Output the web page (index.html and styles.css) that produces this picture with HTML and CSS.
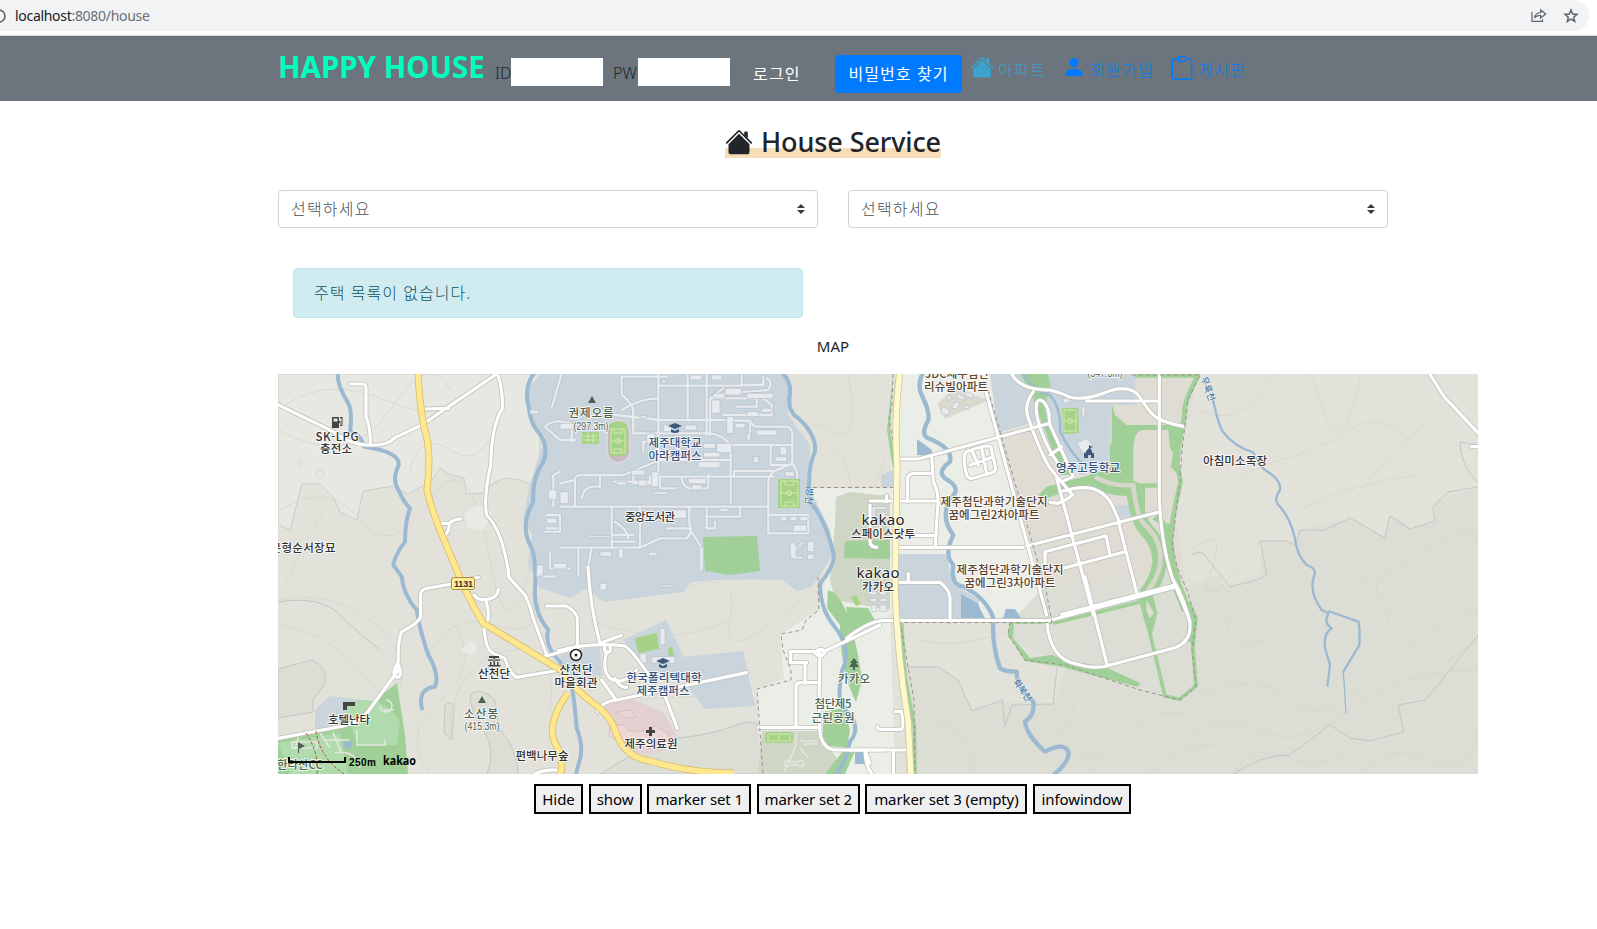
FILE: index.html
```html
<!DOCTYPE html>
<html lang="ko">
<head>
<meta charset="utf-8">
<title>Happy House</title>
<link rel="stylesheet" href="styles.css">
</head>
<body>
<div class="chrome">
  <div class="address">
    <svg class="info" width="14" height="14" viewBox="0 0 14 14"><circle cx="7" cy="7" r="6" fill="none" stroke="#5f6368" stroke-width="1.6"/></svg>
    <span class="url">localhost<span class="path">:8080/house</span></span>
    <svg class="share" width="16" height="15" viewBox="0 0 16 15" fill="none" stroke="#5f6368" stroke-width="1.2"><path d="M1 4v9.3h10.5v-2"/><path d="M3.500 10C4 6.500 6 4.700 9.700 4.500V1.800L14.700 6l-5 4V7.300C7 7.300 5 8 3.500 10z"/></svg>
    <svg class="star" width="16" height="16" viewBox="0 0 16 16" fill="none" stroke="#5f6368" stroke-width="1.5"><path d="M8 2l1.700 4 4.300.4-3.300 2.800 1 4.300L8 11.200l-3.700 2.300 1-4.300L2 6.400 6.300 6z"/></svg>
  </div>
</div>

<nav class="navbar">
  <a class="brand">HAPPY HOUSE</a>
  <label class="field id">ID<input></label>
  <label class="field pw">PW<input></label>
  <a class="login">로그인</a>
  <button class="find">비밀번호 찾기</button>
  <a class="menu apt"><svg width="24" height="24" viewBox="0 0 16 16" fill="currentColor"><path d="M8 3.293l6 6V13.500a1.500 1.500 0 0 1-1.500 1.500h-9A1.500 1.500 0 0 1 2 13.500V9.293l6-6zm5-.793V6l-2-2V2.500a.5.5 0 0 1 .5-.5h1a.5.5 0 0 1 .5.5z"/><path d="M7.293 1.500a1 1 0 0 1 1.414 0l6.647 6.646a.5.5 0 0 1-.708.708L8 2.207 1.354 8.854a.5.5 0 1 1-.708-.708L7.293 1.500z"/></svg><span>아파트</span></a>
  <a class="menu join"><svg width="24" height="24" viewBox="0 0 16 16" fill="currentColor"><path d="M3 14s-1 0-1-1 1-4 6-4 6 3 6 4-1 1-1 1H3zm5-6a3 3 0 1 0 0-6 3 3 0 0 0 0 6z"/></svg><span>회원가입</span></a>
  <a class="menu board"><svg width="24" height="24" viewBox="0 0 16 16" fill="none" stroke="currentColor"><path d="M4.500 2H3a1.500 1.500 0 0 0-1.500 1.500V14A1.500 1.500 0 0 0 3 15.500h10a1.500 1.500 0 0 0 1.500-1.500V3.500A1.500 1.500 0 0 0 13 2h-1.500"/><rect x="5.500" y=".5" width="5" height="3" rx=".8"/></svg><span>게시판</span></a>
</nav>

<main>
  <h3 class="title"><span><svg width="28" height="28" viewBox="0 0 16 16" fill="currentColor"><path d="M8 3.293l6 6V13.500a1.500 1.500 0 0 1-1.500 1.500h-9A1.500 1.500 0 0 1 2 13.500V9.293l6-6zm5-.793V6l-2-2V2.500a.5.5 0 0 1 .5-.5h1a.5.5 0 0 1 .5.5z"/><path d="M7.293 1.500a1 1 0 0 1 1.414 0l6.647 6.646a.5.5 0 0 1-.708.708L8 2.207 1.354 8.854a.5.5 0 1 1-.708-.708L7.293 1.500z"/></svg><b>House Service</b></span></h3>
  <div class="selects">
    <div class="select">선택하세요<svg width="8" height="10" viewBox="0 0 4 5"><path fill="#343a40" d="M2 0L0 2h4zm0 5L0 3h4z"/></svg></div>
    <div class="select">선택하세요<svg width="8" height="10" viewBox="0 0 4 5"><path fill="#343a40" d="M2 0L0 2h4zm0 5L0 3h4z"/></svg></div>
  </div>
  <div class="alert">주택 목록이 없습니다.</div>
  <p class="maptitle">MAP</p>

  <svg class="map" width="1200" height="400" viewBox="278 374 1200 400">
    <defs>
      <g id="wide">
        <g transform="translate(270 365) scale(.33333)">
          <path d="M20 117L190 200Q240 238 290 240Q350 245 375 218L455 180L690 20M682 25Q700 80 697 130Q665 180 662 300Q640 400 650 450Q700 500 717 635M242 57H280Q290 57 288 80V155Q302 190 301 238M462 132L535 130M508 475H537Q560 460 572 462M537 475Q540 500 522 512"/>
        </g>
        <g transform="translate(270 570) scale(.33333)">
          <path d="M715 0V20L765 75Q782 110 788 140L830 255M830 108H890Q925 130 922 150V240M820 260L930 230M545 42L470 55Q450 60 452 80V140Q445 160 395 185Q382 210 385 300Q320 390 290 430Q270 455 220 468L20 506M612 75Q630 98 665 85Q682 80 685 58M648 92Q660 130 652 155M642 165Q645 240 670 250L705 265Q718 310 740 322Q780 315 870 300M382 280Q360 320 385 322Q400 310 382 280M600 28L625 22M795 612Q820 598 860 600"/>
        </g>
        <g transform="translate(560 570) scale(.33333)">
          <path d="M84 -10Q90 110 120 220L185 196M-5 242Q90 215 195 228Q215 240 270 320M135 228Q130 240 140 250Q155 245 150 232M140 245Q125 300 150 325Q190 350 230 300M165 325Q180 355 200 352M125 330L168 390M112 425Q125 395 170 390L560 308M310 365L352 475M690 245H780M692 248V278H740M735 280V340M780 338H720Q708 340 708 350V472M595 472H780M780 250Q775 380 780 490Q790 540 830 540H970M915 540L930 580"/>
          <path d="M765 248Q780 230 797 245Q780 270 765 248M790 245Q900 195 960 165"/>
        </g>
        <g transform="translate(850 365) scale(.33333)">
          <path d="M150 282H205L440 218L600 175M245 275L250 350Q270 390 262 440L256 545M140 547H520M172 410V345Q172 325 195 325H245M60 408H265M110 410V392M60 420V530Q60 545 80 547M190 512H256M405 70L590 750M620 340L730 750M530 543L930 440M585 600V560L768 512L780 570M640 610L825 560M805 470L862 690M140 652H270Q300 675 300 700V770M175 650V625M475 0Q490 75 600 75Q640 85 655 95Q700 108 760 85Q830 55 865 90Q900 145 920 158Q950 175 1000 184M710 108H925M928 25V400Q935 560 975 660Q1010 740 1020 770M640 378Q760 340 795 440L810 475M550 80Q520 120 535 160Q570 260 600 310L668 390Q650 405 625 415L600 412M562 160Q550 90 580 110Q600 130 598 175L670 335L635 350M562 160Q580 230 620 290M600 270L635 245M635 748L975 660"/>
          <path d="M350 260Q335 270 350 330Q355 345 375 338L430 322Q440 315 435 300L422 245Q410 238 350 260M365 255L385 300M360 300L430 275M395 250L410 325"/>
        </g>
        <g transform="translate(850 580) scale(.33333)">
          <path d="M-10 175Q60 120 105 122H590M590 122Q600 240 680 252Q740 270 780 255L975 203Q1030 180 1018 120Q1000 50 970 0M705 -10L772 258M595 122L980 20M-5 510H175M45 510Q45 555 65 580M130 510V585M135 395H155Q165 450 150 448H90Q80 445 82 440"/>
        </g>
        <g transform="translate(1140 365) scale(.33333)"><path d="M865 20L912 95L1020 210M995 245H1025"/></g>
      </g>
      <g id="lanes" transform="translate(560 365) scale(.33333)">
        <path d="M295 25V340M185 35H320M185 35V90Q200 100 220 130V205H450Q490 210 512 240V415M185 135Q240 100 295 100M300 62H545M383 25V160M440 25V210M165 150L300 165H480L570 168L585 185H680Q697 190 697 210V295L640 320Q625 335 625 355V505H745V450H625M512 240H695M632 240V300H690M700 300Q712 310 712 340M522 335V318H640M270 335H640M0 425H625M45 425V340Q50 328 70 330H190L300 285M120 330V365H95Q70 370 65 400M155 425V545M240 425V545M0 548H240L300 520H380Q400 500 388 475V425M155 510H220M155 530H225M165 470Q200 490 205 520M320 490H385M388 490L420 540V615M450 210Q450 160 450 100L490 70M450 100H590V125H530M620 40Q640 50 625 75L490 85M545 30V60H610V35M490 150H635V120L610 100M570 168V220M300 370H350M300 340V365M220 330V355H300M440 425V490M440 455H540V425M440 490H465V470M55 548V630M95 548L80 630M250 260V230H300M160 350H270V335M365 340Q370 380 420 370H445V330M300 285H510"/>
        <path d="M-20 425V330L0 320M-40 450H0V500H-45M-30 560V610H30M5 25L-25 130M-45 185Q-20 160 35 175V230M-40 190L0 225H45M0 355L45 345"/>
      </g>
      <g id="cap"><path d="M-7-2L0-5 7-2 0 1zM-4 1L0 3 4 1v3q-4 2-8 0z"/></g>
    </defs>

    <rect x="278" y="374" width="1200" height="400" fill="#e2e2db"/>

    <!-- terrain shading -->
    <path fill="#e6e8e1" stroke="#cccdc7" d="M278 374H540V490L520 480 505 478 492 484 485 493 466 494 464 478 448 474 441 468 430 482 408 494 393 486 363 491 357 520 340 512 334 498 320 484H302L290 530 278 525z"/>
    <path fill="#dcddd5" d="M905 667H938L958 680 972 710 1000 702 1053 704 1065 670 1180 588 1220 575 1225 587 1260 575 1262 541 1296 544 1300 530 1350 518 1385 537 1396 516 1410 529 1435 522 1435 500 1478 488V774H905z"/>
    <path fill="#dcddd5" stroke="#c5c6c2" d="M278 669L312 660Q328 666 325 684L313 700V712L278 718z"/>
    <path fill="#dcddd5" stroke="#c5c6c2" stroke-width="3" transform="translate(270 570) scale(.33333)" d="M600 375Q630 345 675 390Q680 440 690 480Q740 530 745 615H650Q680 540 640 480Q600 420 600 375zM525 405Q540 390 553 410L545 510 522 490z"/>
    <path fill="#dcddd5" stroke="#c5c6c2" d="M600 774L640 750 660 738Q700 740 745 722L762 724V774z"/>

    <g class="contour">
      <path d="M285 405Q330 375 390 402T480 380T520 374M278 430Q350 470 390 410T450 390M410 470Q420 430 450 450T500 420M280 510Q330 480 360 520T430 500T490 560T540 520M280 600Q330 590 370 620T400 690M278 625Q320 630 350 660T390 710M285 585Q300 550 325 510M455 625Q480 665 440 700T430 774M425 660Q450 610 495 625T540 600M450 720Q460 660 510 650T550 710M600 590Q650 600 695 585T730 620T800 600M640 700Q720 690 780 710M590 620Q670 650 730 620M802 465Q800 410 830 430T850 385T880 380M815 470Q840 430 850 480T885 460"/>
      <path d="M1200 410Q1240 430 1270 380T1320 400T1360 378M1205 510Q1240 470 1280 460T1350 430T1410 440M1190 550Q1230 520 1210 575T1260 541M1330 565Q1360 600 1410 560T1478 540M1370 650Q1400 620 1380 600T1440 520M1205 590Q1240 590 1230 620T1270 640M1200 695Q1260 670 1290 700T1370 680T1478 610M1180 740Q1220 710 1260 730T1350 710T1478 670M1235 774Q1250 740 1290 758T1370 730T1478 640M1360 774Q1390 740 1430 760T1478 730M930 724Q960 715 975 770M920 640Q960 650 1010 630M1070 700Q1080 720 1060 730T1100 760M1090 774Q1140 700 1190 715M1150 774Q1180 740 1220 745M1355 500Q1380 460 1430 420M1300 510Q1360 480 1420 475"/>
      <circle cx="320" cy="474" r="4"/><ellipse cx="300" cy="463" rx="2" ry="4"/>
    </g>
    <path class="ridge" d="M1192 554L1202 552L1230 587L1257 580L1267 575L1260 541H1285L1296 545L1300 530L1325 530L1350 518L1366 527L1385 538L1390 516L1410 529L1435 521L1433 507L1448 492L1478 487M1234 774Q1260 755 1290 755L1330 725L1350 738L1370 741L1404 732L1398 705L1425 700L1450 670L1478 635M278 602Q320 595 340 615T380 650M905 667H938L958 680L972 711L1002 700L1005 727L1012 705L1053 704L1057 668M1478 483Q1460 465 1460 442L1478 445"/>

    <!-- districts -->
    <path fill="#ebede7" d="M896 374H990L1060 620H1050L895 622 890 610 895 774H761L757 689 784 679 780 635 818 610 833 545 806 488H890z"/>
    <path fill="#c9d4dc" d="M540 374H783L790 390 788 415 810 445 808 485 830 530 833 555 812 587 797 591 782 580Q710 578 690 583L684 592 604 602 585 589 570 598 540 588 528 565 532 535 523 520 530 484 544 440 532 427 526 390z"/>
    <path fill="#c9d4dc" d="M623 640L666 620 684 657 743 651 755 706 705 709 683 680 650 678zM990 374H1135V405H1111V475L1070 470 1048 440 1040 420 998 433zM898 554H946L953 583 979 600V618H898zM881 475L893 470V487H881zM560 655L600 645 602 675 570 690z"/>
    <path fill="#dfdcd4" d="M998 433L1040 425 1060 480 1100 480 1112 404H1132V374H1198L1180 460 1176 520 1190 610 1052 619z"/>
    <path fill="#dcddd5" d="M1043 588L1180 570 1196 620 1194 683 1180 700 1046 656 1012 640 1013 620z"/>
    <path fill="#c9d4dc" d="M1116 506L1130 504 1134 516 1118 519z"/>
    <path fill="#cfd6c5" d="M836 497L850 492 890 496V574L890 610 835 600 830 580 835 525zM762 731H820L846 774H758z"/>
    <path fill="#c9d4dc" d="M315 710L330 696 365 700 369 708 350 727 315 732z"/>
    <path fill="#e3d1d1" d="M599 705L630 698 663 712 680 740 660 752 630 755z"/>
    <path fill="#dad9ce" d="M937 404L955 389 989 400 945 419z"/>
    <g fill="#eaeae5"><path d="M465 513L479 505 492 513 484 530 467 528zM461 650L470 641 476 642 475 654 461 652z"/></g>

    <!-- parks -->
    <g fill="#a0d098">
      <path d="M703 537L757 536 760 571 730 575 705 571zM845 541L890 540V559L844 558zM846 607L868 608 876 622 850 632zM828 590Q850 595 862 680L856 702Q840 670 840 625L827 608z"/>
      <path d="M397 683L405 735 408 774H278V740L345 724zM843 708L850 730 847 748 823 745 823 712zM843 751H855L845 774H825z"/>
      <path d="M1010 620L1050 620 1052 624H1014L1013 638 1030 658 1052 655 1064 660 1105 667 1140 683 1138 687 1062 667 1025 661 1008 635zM1052 622L1148 598V602L1054 625zM893 374L890 430Q895 450 893 470L887 430z"/>
      <path d="M1020 374H1048L1051 390Q1040 405 1050 430L1075 475 1060 475 1045 430 1030 390z"/>
    </g>
    <g transform="translate(850 365) scale(.33333)">
      <path fill="#a0d098" d="M785 115L795 150 830 180H1000L985 250 975 300 995 350 975 420 960 480H935L870 440 860 385 790 390 720 360 660 375 590 400 565 390 590 365 720 330 725 290 785 235zM820 25H1050V38H820z"/>
      <path fill="#dfdcd4" d="M850 260Q850 195 880 195H925V355H860Q845 350 850 330zM935 195H955L960 250 970 265 962 305 985 330 988 370 962 475Q930 485 935 400zM885 368H930V440L900 470 885 440z"/>
      <g fill="none" stroke="#a0d098" stroke-width="14" stroke-linejoin="round">
        <path stroke-width="44" d="M735 345Q780 375 850 370Q860 460 885 490Q935 540 928 600Q920 650 885 690"/>
        <path stroke="#d8d6cb" d="M735 335Q780 365 850 360Q860 460 885 480Q940 530 930 600Q920 650 890 680"/>
        <path d="M1045 30Q1000 110 1003 150L985 250 982 300 992 350 970 450 962 520 975 640 1010 720 1035 780"/>
        <path stroke-width="30" d="M945 480L958 580 980 660 1010 735"/>
        <path d="M550 600L590 750"/>
      </g>
    </g>
    <g transform="translate(850 580) scale(.33333)">
      <path fill="#a0d098" d="M865 50H910L922 100 903 175 885 130zM1018 60L1042 110 1035 200 1010 180z"/>
      <path fill="#dcddd5" d="M890 60L912 100 900 115 888 90z"/>
      <path fill="none" stroke="#a0d098" stroke-width="11" d="M1038 110L1028 190 1038 318 988 358 945 348 895 140M155 130L165 290 193 440 195 590"/>
    </g>
    <g fill="#b0dbac"><path d="M345 705Q375 690 400 720L397 745H357z"/><path d="M278 743L340 733 348 774H290z"/></g>
    <g fill="#c9d4dc"><path d="M1052 374H1135V405H1110V470L1080 475 1060 430 1050 400z"/></g>

    <!-- water -->
    <g class="river">
      <path transform="translate(270 365) scale(.33333)" stroke-width="12" d="M203 20Q200 60 235 115Q248 140 240 200Q270 205 282 245Q390 260 386 300Q365 345 385 375Q400 410 420 430Q405 470 405 530Q375 570 370 600L395 635Q400 690 440 735Q450 800 475 870Q510 930 495 965Q440 970 457 1035"/>
      <path transform="translate(270 365) scale(.33333)" stroke-width="12" d="M800 15Q760 60 775 120Q780 170 800 195Q840 240 820 290Q785 340 790 410Q750 480 780 540Q800 570 795 670Q790 740 835 795Q820 840 870 890L905 960Q915 1020 920 1090Q945 1150 925 1200L915 1240"/>
      <path transform="translate(560 365) scale(.33333)" stroke-width="12" d="M660 15Q695 50 690 85Q680 140 715 160Q770 210 765 260Q740 310 750 410Q795 460 822 570Q820 610 780 655Q780 730 820 780Q880 850 845 920Q830 1010 850 1030Q910 1080 870 1130Q855 1200 820 1240"/>
      <path transform="translate(850 365) scale(.33333)" stroke-width="13" d="M220 20Q200 60 215 90Q240 140 235 165Q210 210 235 220Q310 250 300 290Q260 320 285 340Q340 370 300 400Q270 460 310 510Q280 570 310 600Q300 660 340 665Q410 700 430 760Q425 840 450 910Q465 920 500 920Q500 970 550 1010Q555 1050 525 1070Q530 1110 585 1160Q640 1130 655 1160Q660 1190 610 1230"/>
      <path transform="translate(850 365) scale(.33333)" stroke-width="7" d="M520 25Q550 80 600 90Q635 130 630 200Q660 260 700 300"/>
      <path transform="translate(1140 365) scale(.33333)" stroke-width="7" d="M218 100Q230 160 245 195Q280 245 340 262Q355 300 375 315Q425 345 420 375Q400 405 415 420Q450 455 465 520Q470 570 500 600Q530 610 523 630Q505 680 545 735L565 745Q550 775 575 790Q545 810 558 860L570 900L562 965M565 738L655 770Q660 790 658 840L610 920"/>
      <path transform="translate(1140 365) scale(.33333)" stroke-width="4" d="M658 840L610 920L618 1045"/>
    </g>
    <path fill="#9bb9d0" d="M917 439L932 450V456L917 455zM961 594L977 603 985 618H961zM1006 609L1015 609 1021 618H1003zM855 752H865V764H855z"/>
    <circle cx="348" cy="745" r="4" fill="#9bb9d0"/>

    <!-- campus buildings and lanes -->
    <use href="#lanes" class="lane-casing"/>
    <use href="#lanes" class="lane"/>
    <g class="buildings" transform="translate(560 365) scale(.33333)">
      <path d="M390 30h35v15h-35zM455 30h30v15h-30zM495 70h50v20h-50zM460 85h35v15h-35zM455 105h25v40h-25zM560 85h80v15h-80zM560 140h35v15h-35zM605 130h30v12h-30zM500 155h20v50h-20zM525 175h30v14h-30zM590 195h60v16h-60zM470 235h45v28h-45zM430 262h50v14h-50zM415 290h65v18h-65zM430 235h35v15h-35zM310 180h30v20h-30zM375 180h35v15h-35zM240 152h20v8h-20zM260 205h25v30h-25zM660 245h20v25h-20zM645 275h35v14h-35zM675 320h28v14h-28zM215 315h40v15h-40zM170 350h30v10h-30zM235 345h25v18h-25zM275 320h20v45h-20zM385 340h55v16h-55zM395 360h30v15h-30zM330 435h50v25h-50zM235 440h35v20h-35zM85 512h68v6h-68zM175 550h15v30h-15zM120 560h35v14h-35zM265 562h25v10h-25zM660 455h20v12h-20zM690 455h20v12h-20zM720 455h25v12h-25zM700 480h40v20h-40zM742 530h20v30h-20zM742 568h20v15h-20zM690 535l15-3 5 15 15-18 8 5-25 20v20h20v8h-35zM480 430h25v10h-25zM580 275h15v18h-15zM280 380h45v8h-45zM0 380h25v35h-25zM-40 460h30v15h-30zM-35 375h25v28h-25zM0 175h40v18h-40zM420 545h10v70h-10zM-20 595h40v15h-40zM305 45h12v10h-12zM560 205h12v20h-12z"/>
      <path d="M-70 600h20v35h-20zM-60 630h50v10h-50zM300 660h40v6h-40zM120 655h20v20h-20zM240 865h20v30h-20zM300 790h15v50h-15zM275 875h70v20h-70zM-90 135h25v12h-25zM-45 485h40v10h-40z"/>
      <path transform="translate(870 0)" d="M290 90l20 8-18 8zM275 125l24 8-5 18-20-5zM325 88l20 8-5 10-22-8zM350 80l20 8-5 12-20-8zM315 110l15 5-10 18-15-5zM345 120l15 5-5 8-14-4zM680 235l30-15 20 25-30 20zM640 100h18v14h-18zM695 125h10v28h-10zM65 425h45v8H75v30H65zM95 440h10v40h-10zM60 655h20v10h-20zM90 655h20v10h-20zM60 680h20v10h-20zM90 680h20v10h-20zM60 700h20v10h-20zM90 700h20v10h-20zM65 720h15v20h-15zM90 720h20v20h-20z"/>
    </g>
    <g fill="#edd6d6" stroke="#cfb2b2" stroke-width=".6"><path d="M610 725h14l5 6h20l6-5 14 8v8h-42l-18-5zM617 712l14-2 5 8-12-1z"/></g>
    <g fill="none" stroke="#e4e8df" stroke-width="1.500"><path d="M292 742h25v6h-25zM300 731l-5 18M320 733l10 15M357 730v15h28v-5M380 706a6 6 0 1 0 6-6M384 710h10M333 732l8 20M325 740h25M335 753q20-4 25 15M796 728v16q-4 12-12 28M790 762h8a3 3 0 1 1 0 3h-8a3 3 0 1 1 0-3M800 741h16v3h-12M800 748l8 10"/></g>

    <!-- sport fields -->
    <rect x="607" y="420" width="23" height="43" rx="11.500" fill="#c9babf" stroke="#d6dadd" stroke-width="2"/>
    <g class="field-green"><rect x="609" y="422" width="18" height="34" rx="5"/><rect x="582" y="432" width="17" height="12"/><rect x="778" y="479" width="22" height="29"/><path d="M635 638L657 633 659 649 638 653zM668 648l4-1 2 8-5 2zM1062 408h16l1 25-16 1z"/><rect x="765" y="732" width="28" height="11" rx="4"/><path d="M851 597l5-2 5 9-5 2zM1141 592"/></g>
    <g fill="none" stroke="#d9edb9" stroke-width=".9"><path d="M611 429h14v24h-14zM611 441h14M614 429v4h8v-4M614 453v-4h8v4M781 481h17v25h-17zM781 493h17M785 481v4h9v-4M785 506v-4h9v4M583 436h15M583 440h15M588 433v10M593 433v10M1064 410h12v21h-12zM1064 421h12M768 734h22v7h-22zM779 734v7"/><circle cx="618" cy="441" r="2.500"/><circle cx="789" cy="493" r="2.500"/><circle cx="1070" cy="421" r="2.500"/></g>

    <!-- roads -->
    <use href="#wide" class="road-casing"/>
    <use href="#wide" class="road"/>
    <g class="dash">
      <path d="M806 487.500H895M818 577L819 610 806 620 802 630 781 634 783 650 791 670V680L757 689 763 774M893 374L892 405 889 420 895 450M988 390L1046 590 1052 622.500H900L914 700 915 774M1010 622L1008 635 1025 660 1065 665 1140 690 1180 700 1196 687 1192 650 1196 620 1187 590 1178 570 1172 545 1180 480 1182 450 1188 400 1200 375H1130"/>
    </g>
    <path fill="none" stroke="#b4482f" stroke-dasharray="3 2" d="M306 733Q320 755 317 774M316 731Q320 758 344 774"/>
    <g class="highway">
      <path class="edge" d="M418 370Q419 400 424 427Q432 450 427 490Q430 505 440 530L463 585Q475 610 483 623L562 671Q575 690 598 707Q612 718 617 735Q625 757 650 761Q690 773 734 773M568 693Q545 725 556 745Q565 760 560 776"/>
      <path d="M418 370Q419 400 424 427Q432 450 427 490Q430 505 440 530L463 585Q475 610 483 623L562 671Q575 690 598 707Q612 718 617 735Q625 757 650 761Q690 773 734 773M568 693Q545 725 556 745Q565 760 560 776"/>
      <path class="edge pale" d="M900 370Q894 420 897 465L895 590Q898 660 908 720L911 776"/>
      <path class="pale" d="M900 370Q894 420 897 465L895 590Q898 660 908 720L911 776"/>
    </g>
    <rect x="451.500" y="577.500" width="23" height="12" rx="2" fill="#ffeb95" stroke="#a68d40"/>

    <!-- map symbols -->
    <g fill="#444"><path fill-rule="evenodd" d="M332 417h7v11h-7zM333.500 418.500v3h4v-3zM339 421h1.500v4h1v-6l-2-2h3v9h-2.500v-3h-1zM343 702h12v4h-8v4h-4zM489 656h10v2h-10zM488 659.500h12v1.200h-12zM490 662h1.500v3h2v-7h1.500v7h2v-3h1.500v3h2v1.500h-12v-1.500h1.500zM649 727h3v3h3v3h-3v3h-3v-3h-3v-3h3z"/></g>
    <g fill="#4d6351"><path d="M588 403l4-7 4 7zM478 703l4-7 4 7zM298 742l7 4-6 3v4h-1zM854 658l4 5h-2l3 4h-4v3h-2v-3h-4l3-4h-2z"/></g>
    <g fill="#3d5a7d"><use href="#cap" x="675" y="428"/><use href="#cap" x="663" y="663"/><path d="M1084 458v-5h2v-2l3-3v-3l4 2-3 1 2 3v2h2v5h-3v-3h-3v3z"/></g>
    <circle cx="576" cy="655" r="5.500" fill="#fff" stroke="#222" stroke-width="1.500"/><circle cx="576" cy="655" r="1.500" fill="#222"/>

    <!-- labels -->
    <g class="label">
      <text x="337" y="441" textLength="43">SK-LPG</text><text x="336" y="453" textLength="32">충전소</text>
      <text x="303" y="552" textLength="65">문형순서장묘</text>
      <text x="650" y="521" textLength="50">중앙도서관</text>
      <text x="494" y="678" textLength="32">산천단</text>
      <text x="542" y="760" textLength="53">편백나무숲</text>
      <text x="349" y="724" textLength="42">호텔난타</text>
      <text x="576" y="674" textLength="33">산천단</text><text x="576" y="687" textLength="43">마을회관</text>
      <text x="651" y="748" textLength="53">제주의료원</text>
      <text x="883" y="538" textLength="64">스페이스닷투</text><text x="878" y="591" textLength="32">카카오</text>
      <text x="1235" y="465" textLength="64">아침미소목장</text>
      <text class="road-no" x="463.500" y="587" textLength="19">1131</text>
      <text class="poi" x="883" y="525" textLength="43">kakao</text><text class="poi" x="878" y="578" textLength="43">kakao</text>
    </g>
    <g class="label nature">
      <text x="591" y="417" textLength="45">권제오름</text><text class="alt" x="591" y="430" textLength="35" lengthAdjust="spacingAndGlyphs">(297.3m)</text>
      <text x="481" y="718" textLength="34">소산봉</text><text class="alt" x="482" y="730" textLength="35" lengthAdjust="spacingAndGlyphs">(415.3m)</text>
      <text x="854" y="683" textLength="32">카카오</text><text x="833" y="708" textLength="37">첨단제5</text><text x="833" y="722" textLength="43">근린공원</text>
      <text x="300" y="769" textLength="46">한라산CC</text>
      <text class="alt" x="1105" y="377" textLength="35" lengthAdjust="spacingAndGlyphs">(347.3m)</text>
    </g>
    <g class="label school">
      <text x="675" y="447" textLength="53">제주대학교</text><text x="675" y="460" textLength="53">아라캠퍼스</text>
      <text x="664" y="682" textLength="75">한국폴리텍대학</text><text x="663" y="695" textLength="53">제주캠퍼스</text>
      <text x="1088" y="472" textLength="64">영주고등학교</text>
    </g>
    <g class="label apart">
      <text x="957" y="378" textLength="64">JDC제주첨단</text><text x="956" y="391" textLength="64">리슈빌아파트</text>
      <text x="994" y="506" textLength="107">제주첨단과학기술단지</text><text x="994" y="519" textLength="91">꿈에그린2차아파트</text>
      <text x="1010" y="574" textLength="107">제주첨단과학기술단지</text><text x="1010" y="587" textLength="91">꿈에그린3차아파트</text>
    </g>
    <g class="label stream">
      <text transform="translate(1205 390) rotate(70)">무룩천</text><text transform="translate(1020 692) rotate(55)">화북천</text><text transform="translate(806 496) rotate(95)">방천</text>
    </g>
    <path d="M289 757v5h56v-5" fill="none" stroke="#000" stroke-width="2"/>
    <g class="scale"><text x="349" y="766" textLength="27">250m</text><text class="logo" x="383" y="765" textLength="33" lengthAdjust="spacingAndGlyphs">kakao</text></g>
  </svg>

  <div class="buttons">
    <button style="width:49px">Hide</button><button style="width:53px">show</button><button style="width:104px">marker set 1</button><button style="width:103px">marker set 2</button><button style="width:162px">marker set 3 (empty)</button><button style="width:98px">infowindow</button>
  </div>
</main>
</body>
</html>
```
FILE: styles.css
```css
* { box-sizing: border-box; }
body {
  margin: 0;
  background: #fff;
  color: #212529;
  font: 16px/24px "Noto Sans", "Noto Sans CJK KR", sans-serif;
  overflow: hidden;
}
svg { flex: none; }
.chrome { height: 36px; border-bottom: 1px solid #d5d8dc; }
.address {
  display: flex;
  align-items: center;
  width: 1589px;
  height: 31px;
  background: #f1f3f4;
  border-radius: 0 16px 16px 0;
}
.info { margin-left: -8px; }
.url { margin-left: 9px; font-size: 14px; letter-spacing: -.3px; color: #202124; }
.path { color: #6b6f74; }
.share { margin-left: auto; margin-right: 16px; }
.star { margin-right: 10px; }

.navbar {
  display: flex;
  height: 65px;
  padding-left: 278px;
  background: #6c757d;
  white-space: nowrap;
}
.brand {
  width: 217px;
  padding-top: 11px;
  color: #00ffbf;
  font-size: 29.500px;
  line-height: 40px;
  font-weight: 700;
}
.field { display: flex; height: 28px; margin-top: 22px; line-height: 30px; font-weight: 300; }
.field input { flex: none; width: 92px; height: 28px; margin-left: auto; border: 0; padding: 0; background: #fff; }
.id { width: 108px; }
.pw { width: 117px; margin-left: 10px; }
.login { width: 82px; margin-left: 23px; padding-top: 26px; color: #fff; letter-spacing: 1.200px; }
.find {
  width: 127px;
  height: 38px;
  margin-top: 19px;
  border: 0;
  border-radius: 4px;
  padding: 0;
  background: #007bff;
  color: #fff;
  font: inherit;
  letter-spacing: 1.100px;
}
.menu { display: flex; color: #007bff; font-weight: 300; letter-spacing: 1.400px; padding-top: 22px; }
.menu svg { margin-top: -3px; }
.apt { width: 84px; margin-left: 8px; color: #3aa2cd; }
.apt span { margin-left: 4px; }
.join { width: 108px; margin-left: 8px; }
.join span { margin-left: 4px; }
.board svg { margin-top: -2px; }
.board span { margin-left: 4px; }

main { width: 1110px; margin-left: 278px; }
.title {
  display: flex;
  justify-content: center;
  margin: 0;
  padding-top: 24px;
  font-size: 28px;
  line-height: 33px;
}
.title span {
  display: flex;
  width: 216px;
  height: 33px;
  background: linear-gradient(to top, #f8deb8 10px, transparent 10px);
}
.title svg { margin-top: 3px; }
.title b { margin-left: 8px; font-weight: 500; font-size: 27px; letter-spacing: -.1px; white-space: nowrap; }
.selects { display: grid; grid-template-columns: 540px 540px; gap: 30px; margin-top: 32px; }
.select {
  display: flex;
  align-items: center;
  justify-content: space-between;
  height: 38px;
  padding: 0 12px;
  border: 1px solid #ced4da;
  border-radius: 4px;
  color: #495057;
  font-weight: 300;
  letter-spacing: 1.200px;
}
.alert {
  width: 510px;
  height: 50px;
  margin: 40px 0 0 15px;
  padding: 12px 20px;
  border: 1px solid #bee5eb;
  border-radius: 4px;
  background: #d1ecf1;
  color: #0c5460;
  font-weight: 300;
  letter-spacing: 1.050px;
}
.maptitle { margin: 16px 0 0; text-align: center; font-size: 15px; }
.map { display: block; margin-top: 16px; }
.buttons { display: flex; gap: 5.600px; margin: 10px 0 0 256px; }
.buttons button {
  height: 30px;
  padding: 0;
  border: 2px solid #000;
  background: #efefef;
  color: #000;
  font: 15px/24px "Noto Sans", sans-serif;
  letter-spacing: -.1px;
  white-space: nowrap;
}

.contour > * { fill: none; stroke: #d4d5ce; stroke-width: .8; }
.ridge { fill: none; stroke: #c4c6c2; }
.river path { fill: none; stroke: #9bb9d0; stroke-linejoin: round; }
.buildings path { fill: #e8ebed; stroke: #b8c0ca; stroke-width: 2; }
.lane, .lane-casing, .road, .road-casing { fill: none; stroke-linejoin: round; stroke-linecap: round; }
.lane-casing { stroke: #b7c1ca; stroke-width: 11; }
.lane { stroke: #e9ecee; stroke-width: 7; }
.road-casing { stroke: #bebfba; stroke-width: 14; }
.road { stroke: #fff; stroke-width: 9.500; }
.field-green { fill: #a5d285; }
.dash { fill: none; stroke: #9c918a; stroke-dasharray: 4 3; }
.highway path { fill: none; stroke: #ffe78e; stroke-width: 5.500; }
.highway .edge { stroke: #d5b965; stroke-width: 7; }
.highway .pale { stroke: #fff9c9; stroke-width: 5.500; }
.highway .edge.pale { stroke: #c8c3a0; stroke-width: 7; }
.label {
  font: 500 11.500px "Noto Sans CJK KR", sans-serif;
  fill: #333;
  stroke: #fff;
  stroke-opacity: .8;
  stroke-width: 2px;
  stroke-linejoin: round;
  paint-order: stroke;
  text-anchor: middle;
}
.nature { fill: #4d6351; }
.school { fill: #33517a; }
.apart { fill: #59432f; }
.stream { fill: #42719b; stroke-width: 1px; font-size: 9px; }
.label .alt { font: 10.500px "Liberation Sans", sans-serif; }
.label .road-no { font: 700 9px "Liberation Sans", sans-serif; stroke: none; }
.label .poi { font: 400 15px "Noto Sans", sans-serif; fill: #222; }
.scale { font: 700 10px "Liberation Sans", sans-serif; fill: #000; }
.scale .logo { font: 700 12px "Noto Sans", sans-serif; }
```
